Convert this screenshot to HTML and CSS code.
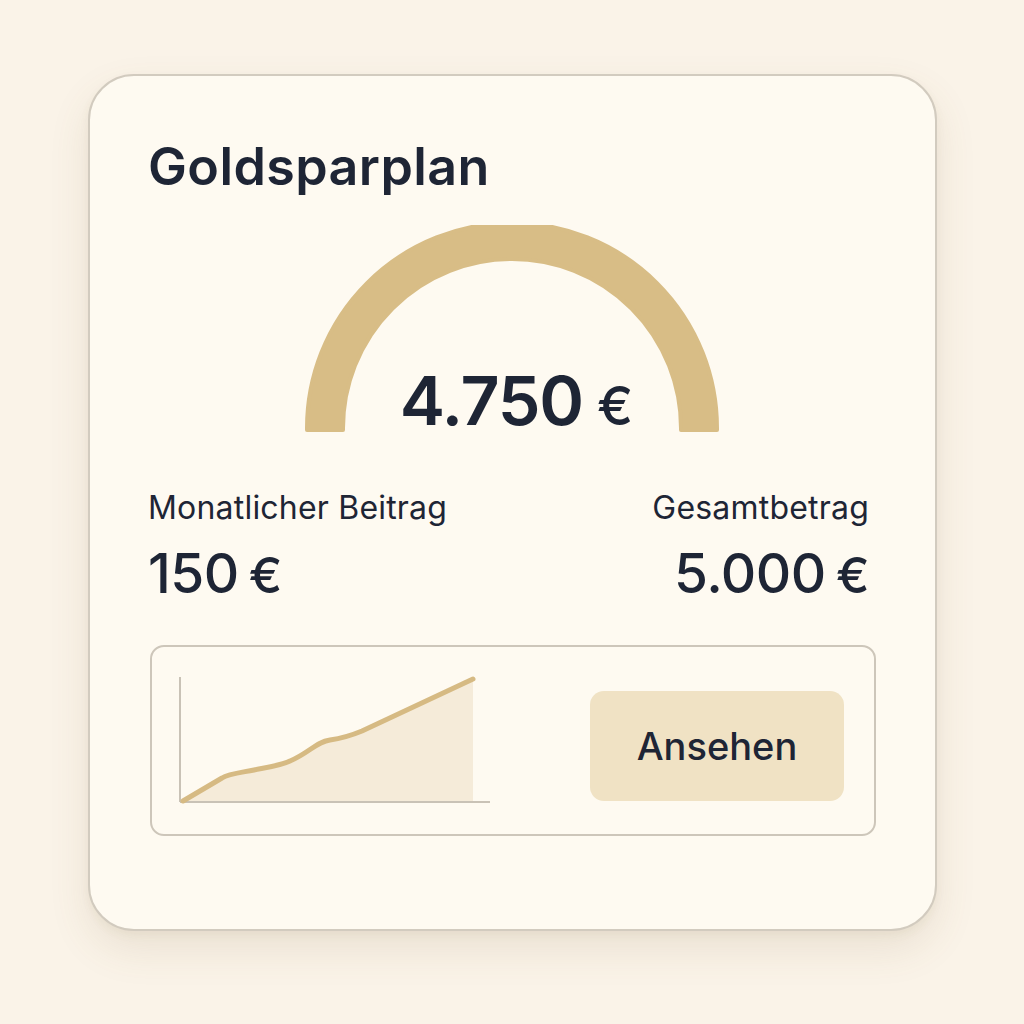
FILE: index.html
```html
<!DOCTYPE html>
<html lang="de">
<head>
<meta charset="utf-8">
<title>Goldsparplan</title>
<link rel="stylesheet" href="styles.css">
</head>
<body>
<main class="card">
  <h1 class="title">Goldsparplan</h1>
  <div class="gauge">
    <svg class="gauge-arc" width="414" height="207" viewBox="0 0 414 207">
      <path d="M2 203 A205 205 0 0 1 412 203 L412 205 L376 205 L376 203 A169 169 0 0 0 38 203 L38 205 L2 205 Z" fill="#d8bd86" stroke="#d8bd86" stroke-width="4" stroke-linejoin="round"/>
    </svg>
    <div class="gauge-value"><span class="num">4.750</span><span class="cur">€</span></div>
  </div>
  <div class="stats">
    <div class="stat">
      <div class="label">Monatlicher Beitrag</div>
      <div class="value">150<span class="cur">€</span></div>
    </div>
    <div class="stat right">
      <div class="label">Gesamtbetrag</div>
      <div class="value">5.000<span class="cur">€</span></div>
    </div>
  </div>
  <div class="panel">
    <svg class="chart" width="340" height="142" viewBox="0 0 340 142">
      <path d="M29 140 L71 114 C90 106 115 105 136 99 C155 93 162 80 176 78 C190 76 196 74 208 69 L319 17 L319 140 Z" fill="#f5ebd9"/>
      <line x1="26" y1="15" x2="26" y2="140" stroke="#c9c2b6" stroke-width="2"/>
      <line x1="26" y1="140" x2="336" y2="140" stroke="#c9c2b6" stroke-width="2"/>
      <path d="M29 139 L68 116 C74 112 84 111 100 108 C115 105 128 103 136 99 C155 91 162 80 176 78 C190 76 196 74 208 69 L319 17" fill="none" stroke="#d6ba83" stroke-width="5" stroke-linecap="round" stroke-linejoin="round"/>
    </svg>
    <button class="btn">Ansehen</button>
  </div>
</main>
</body>
</html>
```
FILE: styles.css
```css
* { box-sizing: border-box; }
html, body { margin: 0; padding: 0; }
body {
  background: #faf3e8;
  width: 1024px;
  height: 1024px;
  overflow: hidden;
  font-family: Inter, "Noto Sans", sans-serif;
  color: #1e2535;
}
.card {
  margin: 74px 0 0 88px;
  width: 849px;
  height: 857px;
  background: #fefaf1;
  border: 2px solid #d2cbbf;
  border-radius: 46px;
  box-shadow: 0 18px 40px rgba(120, 95, 55, 0.12), 0 4px 10px rgba(120, 95, 55, 0.06);
  padding: 61px 66px 0 58px;
  display: flex;
  flex-direction: column;
}
.title {
  margin: 0;
  font-size: 52px;
  font-weight: 600;
  line-height: 60px;
  letter-spacing: 0.4px;
}
.gauge {
  position: relative;
  align-self: center;
  margin-top: 28px;
  margin-left: 6px;
  width: 414px;
  height: 207px;
}
.gauge-arc { display: block; }
.gauge-value {
  position: absolute;
  left: 0;
  right: 0;
  bottom: -2px;
  padding-left: 10px;
  text-align: center;
  line-height: 1;
  white-space: nowrap;
}
.gauge-value .num { font-size: 68px; font-weight: 600; letter-spacing: -1.2px; }
.gauge-value .cur { font-size: 54px; font-weight: 500; margin-left: 14px; }
.stats {
  display: flex;
  justify-content: space-between;
  margin-top: 57px;
}
.stat.right { text-align: right; }
.label {
  font-size: 32px;
  font-weight: 400;
  line-height: 38px;
  letter-spacing: 0.2px;
}
.value {
  margin-top: 16px;
  font-size: 55px;
  font-weight: 500;
  line-height: 60px;
  letter-spacing: -0.5px;
}
.value .cur { margin-left: 10px; font-size: 50px; }
.panel {
  margin-top: 40px;
  margin-left: 2px;
  margin-right: -7px;
  height: 191px;
  border: 2px solid #cdc6ba;
  border-radius: 14px;
  display: flex;
  align-items: center;
  justify-content: space-between;
  padding: 0 30px 0 2px;
}
.chart { display: block; align-self: flex-start; margin-top: 15px; }
.btn {
  width: 254px;
  height: 110px;
  margin-top: 11px;
  background: #f0e2c4;
  border: none;
  border-radius: 14px;
  font-family: Inter, "Noto Sans", sans-serif;
  font-size: 38px;
  font-weight: 500;
  color: #1e2535;
}
```
